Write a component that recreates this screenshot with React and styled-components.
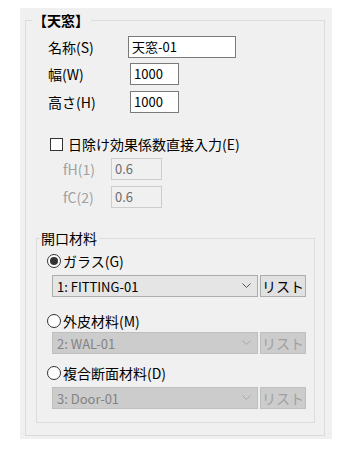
import React from "react";
import styled, { createGlobalStyle } from "styled-components";

const GlobalStyle = createGlobalStyle`
  body {
    margin: 0;
    background: #ffffff;
    font-family: "Noto Sans CJK JP", "Noto Sans", sans-serif;
    color: #000;
  }
`;

const Panel = styled.div`
  margin: 8px 0 0 20px;
  width: 312px;
  height: 431px;
  background: #f0f0f0;
  padding: 12px 8px 4px 5px;
  box-sizing: border-box;
`;

const Group = styled.div`
  position: relative;
  box-sizing: border-box;
  border: 1px solid #dcdcdc;
  display: flex;
  flex-direction: column;
  align-items: flex-start;
  width: ${(p) => p.$w}px;
  height: ${(p) => p.$h}px;
  padding: ${(p) => p.$pad};
  margin: ${(p) => p.$margin || 0};
`;

const Legend = styled.span`
  position: absolute;
  top: -10px;
  left: ${(p) => p.$left}px;
  padding: 0 2px 0 1px;
  background: #f0f0f0;
  font-size: 14px;
  line-height: 18px;
  font-weight: ${(p) => (p.$bold ? 700 : 400)};
`;

const FieldRow = styled.div`
  display: flex;
  align-items: center;
  height: 22px;
  margin-top: ${(p) => p.$mt || 0}px;
  padding-left: ${(p) => p.$pl || 0}px;
`;

const Label = styled.span`
  width: ${(p) => p.$w}px;
  font-size: 14px;
  color: ${(p) => (p.$disabled ? "#a0a0a0" : "#000")};
`;

const TextBox = styled.div`
  box-sizing: border-box;
  width: ${(p) => p.$w}px;
  height: 22px;
  border: 1px solid ${(p) => (p.$disabled ? "#cccccc" : "#7a7a7a")};
  background: ${(p) => (p.$disabled ? "#f0f0f0" : "#ffffff")};
  color: ${(p) => (p.$disabled ? "#6d6d6d" : "#000")};
  font-size: 13px;
  line-height: 20px;
  padding-left: 3px;
`;

const CheckRow = styled.label`
  display: flex;
  align-items: center;
  height: 20px;
  margin-top: 21px;
  padding-left: 2px;
  font-size: 14px;
  gap: 5px;
`;

const CheckBox = styled.span`
  box-sizing: border-box;
  width: 13px;
  height: 13px;
  border: 1px solid #333;
  background: #fff;
`;

const RadioRow = styled.label`
  display: flex;
  align-items: center;
  height: 18px;
  margin-top: ${(p) => p.$mt}px;
  font-size: 14px;
  gap: 2px;
`;

const Radio = styled.span`
  box-sizing: border-box;
  width: 14px;
  height: 14px;
  border-radius: 50%;
  border: 1px solid ${(p) => (p.$checked ? "#333" : "#333")};
  background: #fff;
  display: flex;
  align-items: center;
  justify-content: center;

  &::after {
    content: "";
    display: ${(p) => (p.$checked ? "block" : "none")};
    width: 8px;
    height: 8px;
    border-radius: 50%;
    background: #333;
  }
`;

const SelectRow = styled.div`
  display: flex;
  gap: 2px;
  margin-top: ${(p) => p.$mt}px;
  margin-left: 5px;
`;

const Select = styled.div`
  box-sizing: border-box;
  width: 206px;
  height: 22px;
  display: flex;
  align-items: center;
  justify-content: space-between;
  padding: 0 6px 0 4px;
  border: 1px solid ${(p) => (p.$disabled ? "#bfbfbf" : "#adadad")};
  background: ${(p) => (p.$disabled ? "#cccccc" : "#e5e5e5")};
  color: ${(p) => (p.$disabled ? "#838383" : "#000")};
  font-size: 13px;

  svg {
    stroke: ${(p) => (p.$disabled ? "#a8a8a8" : "#555")};
  }
`;

const ListButton = styled.div`
  box-sizing: border-box;
  width: 46px;
  height: 22px;
  display: flex;
  align-items: center;
  justify-content: center;
  border: 1px solid ${(p) => (p.$disabled ? "#bfbfbf" : "#adadad")};
  background: ${(p) => (p.$disabled ? "#cccccc" : "#e1e1e1")};
  color: ${(p) => (p.$disabled ? "#a0a0a0" : "#000")};
  font-size: 14px;
`;

const Chevron = () => (
  <svg width="9" height="6" viewBox="0 0 9 6" fill="none" strokeWidth="1">
    <path d="M0.5 0.5 L4.5 4.5 L8.5 0.5" />
  </svg>
);

const Material = ({ label, value, checked, disabled, radioMt, selectMt }) => (
  <>
    <RadioRow $mt={radioMt}>
      <Radio $checked={checked} />
      {label}
    </RadioRow>
    <SelectRow $mt={selectMt}>
      <Select $disabled={disabled}>
        <span>{value}</span>
        <Chevron />
      </Select>
      <ListButton $disabled={disabled}>リスト</ListButton>
    </SelectRow>
  </>
);

export default function App() {
  return (
    <>
      <GlobalStyle />
      <Panel>
        <Group $w={300} $h={416} $pad="15px 0 0 22px">
          <Legend $left={6} $bold>【天窓】</Legend>
          <FieldRow>
            <Label $w={80}>名称(S)</Label>
            <TextBox $w={108}>天窓-01</TextBox>
          </FieldRow>
          <FieldRow $mt={5}>
            <Label $w={82}>幅(W)</Label>
            <TextBox $w={49}>1000</TextBox>
          </FieldRow>
          <FieldRow $mt={6}>
            <Label $w={82}>高さ(H)</Label>
            <TextBox $w={49}>1000</TextBox>
          </FieldRow>
          <CheckRow>
            <CheckBox />
            日除け効果係数直接入力(E)
          </CheckRow>
          <FieldRow $mt={4} $pl={15}>
            <Label $w={48} $disabled>fH(1)</Label>
            <TextBox $w={51} $disabled>0.6</TextBox>
          </FieldRow>
          <FieldRow $mt={6} $pl={15}>
            <Label $w={48} $disabled>fC(2)</Label>
            <TextBox $w={51} $disabled>0.6</TextBox>
          </FieldRow>
          <Group $w={279} $h={185} $pad="0 0 0 10px" $margin="30px 0 0 -12px">
            <Legend $left={3}>開口材料</Legend>
            <Material label="ガラス(G)" value="1: FITTING-01" checked radioMt={13} selectMt={5} />
            <Material label="外皮材料(M)" value="2: WAL-01" disabled radioMt={15} selectMt={2} />
            <Material label="複合断面材料(D)" value="3: Door-01" disabled radioMt={10} selectMt={5} />
          </Group>
        </Group>
      </Panel>
    </>
  );
}
